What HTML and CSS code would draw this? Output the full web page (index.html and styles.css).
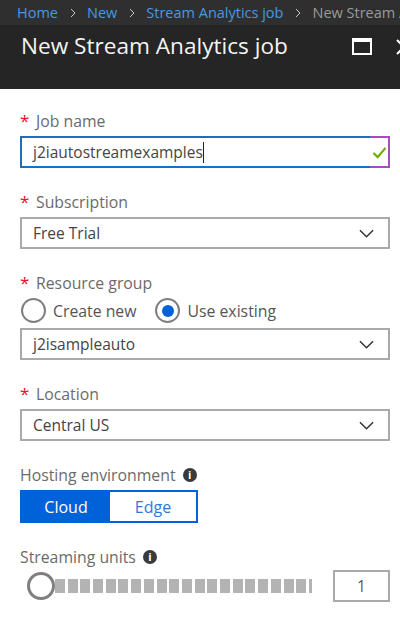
FILE: index.html
```html
<!DOCTYPE html>
<html lang="en">
<head>
  <meta charset="UTF-8" />
  <title>New Stream Analytics job</title>
  <link rel="stylesheet" href="styles.css">
</head>
<body>
  <nav class="crumbs">
    <a>Home</a>
    <svg class="crumb-sep" viewBox="0 0 6 10"><path d="M1 1l4 4-4 4" /></svg>
    <a>New</a>
    <svg class="crumb-sep" viewBox="0 0 6 10"><path d="M1 1l4 4-4 4" /></svg>
    <a>Stream Analytics job</a>
    <svg class="crumb-sep" viewBox="0 0 6 10"><path d="M1 1l4 4-4 4" /></svg>
    <span>New Stream Analytics job</span>
  </nav>

  <header class="blade-head">
    <h1>New Stream Analytics job</h1>
    <span class="maximize"></span>
    <svg class="close" viewBox="0 0 16 16"><path d="M1 1l14 14M15 1L1 15" /></svg>
  </header>

  <form class="blade-form">
    <!-- Job name -->
    <div class="field field-job">
      <div class="label"><span class="req">*</span>Job name</div>
      <div class="box box-focus">
        <span class="value">j2iautostreamexamples</span><span class="caret"></span>
        <span class="valid">
          <svg class="check" viewBox="0 0 16 14"><path d="M1.5 7.5l4.5 4.5L14.5 2" /></svg>
        </span>
      </div>
    </div>

    <!-- Subscription -->
    <div class="field">
      <div class="label"><span class="req">*</span>Subscription</div>
      <div class="box">
        <span class="value">Free Trial</span>
        <svg class="chevron" viewBox="0 0 16 10"><path d="M1 1l7 7 7-7" /></svg>
      </div>
    </div>

    <!-- Resource group -->
    <div class="field">
      <div class="label"><span class="req">*</span>Resource group</div>
      <div class="radios">
        <span class="radio"></span><span class="radio-text radio-text-first">Create new</span>
        <span class="radio radio-on"></span><span class="radio-text">Use existing</span>
      </div>
      <div class="box">
        <span class="value">j2isampleauto</span>
        <svg class="chevron" viewBox="0 0 16 10"><path d="M1 1l7 7 7-7" /></svg>
      </div>
    </div>

    <!-- Location -->
    <div class="field">
      <div class="label"><span class="req">*</span>Location</div>
      <div class="box">
        <span class="value">Central US</span>
        <svg class="chevron" viewBox="0 0 16 10"><path d="M1 1l7 7 7-7" /></svg>
      </div>
    </div>

    <!-- Hosting environment -->
    <div class="field">
      <div class="label">Hosting environment<span class="info">i</span></div>
      <div class="toggle">
        <span class="toggle-on">Cloud</span>
        <span class="toggle-off">Edge</span>
      </div>
    </div>

    <!-- Streaming units -->
    <div class="field">
      <div class="label label-units">Streaming units<span class="info">i</span></div>
      <div class="units">
        <span class="knob"></span>
        <span class="track"></span>
        <span class="units-box">1</span>
      </div>
    </div>
  </form>
</body>
</html>
```

FILE: styles.css
```css
/* Reset */
*, *::before, *::after {
  box-sizing: border-box;
}
html, body {
  height: 100%;
}
body {
  margin: 0;
  overflow: hidden;
  background: #fff;
  font-family: "Open Sans", "Noto Sans", sans-serif;
  color: #444;
}

/* Breadcrumb */
.crumbs {
  display: flex;
  align-items: center;
  height: 25px;
  padding-left: 17px;
  background: #2f2f2f;
  font-size: 14.5px;
  white-space: nowrap;
  overflow: hidden;
}
.crumbs a {
  color: #459ae0;
}
.crumbs span {
  color: #9a9a9a;
}
.crumb-sep {
  flex: none;
  width: 6px;
  height: 10px;
  margin: 0 11px 0 12px;
  fill: none;
  stroke: #c8c8c8;
  stroke-width: 1;
}

/* Blade header */
.blade-head {
  display: flex;
  align-items: flex-start;
  height: 64px;
  padding: 5px 0 0 21px;
  background: #252525;
  overflow: hidden;
}
.blade-head h1 {
  flex: 1;
  margin: 0;
  font-size: 22.6px;
  font-weight: 400;
  line-height: 32px;
  color: #f4f4f4;
}
.maximize {
  flex: none;
  width: 20px;
  height: 17px;
  margin: 8px 0 0 0;
  border: 2px solid #fff;
  border-top-width: 4px;
}
.close {
  flex: none;
  width: 16px;
  height: 16px;
  margin: 9px -12px 0 24px;
  fill: none;
  stroke: #fff;
  stroke-width: 2;
}

/* Form */
.blade-form {
  padding: 0 10px 0 20px;
}
.field {
  margin-top: 22px;
}
.field-job {
  margin-top: 20px;
}
.label {
  display: flex;
  align-items: center;
  height: 23px;
  margin-bottom: 4px;
  font-size: 15.8px;
  color: #6b6b6b;
}
.label-units {
  margin-bottom: 2px;
}
.req {
  width: 16px;
  height: 23px;
  font-size: 17px;
  line-height: 24px;
  color: #e81123;
}
.info {
  width: 14px;
  height: 14px;
  margin-left: 7px;
  border-radius: 50%;
  background: #3a3a3a;
  color: #fff;
  font-size: 11px;
  font-weight: 700;
  line-height: 14px;
  text-align: center;
}
.box {
  display: flex;
  align-items: center;
  height: 32px;
  padding: 0 11px;
  border: 2px solid #a9a9a9;
  font-size: 15.5px;
  color: #444;
}
.value {
  white-space: nowrap;
}
.chevron {
  width: 15px;
  height: 10px;
  margin: 1px 3px 0 auto;
  fill: none;
  stroke: #333;
  stroke-width: 1.6;
}

/* Job name input */
.box-focus {
  position: relative;
  border-color: #1a6fc0;
}
.caret {
  width: 1px;
  height: 21px;
  background: #222;
}
.valid {
  position: absolute;
  top: -2px;
  right: -2px;
  bottom: -2px;
  display: flex;
  align-items: center;
  justify-content: center;
  width: 20px;
  border: 2px solid #a54dbd;
  border-left: none;
}
.check {
  width: 15px;
  height: 13px;
  fill: none;
  stroke: #6cb000;
  stroke-width: 2.4;
}

/* Radios */
.radios {
  display: flex;
  align-items: center;
  height: 25px;
  margin-bottom: 5px;
  padding-left: 1px;
  font-size: 15.8px;
}
.radio {
  display: flex;
  align-items: center;
  justify-content: center;
  flex: none;
  width: 25px;
  height: 25px;
  border: 2px solid #7f7f7f;
  border-radius: 50%;
}
.radio-on::after {
  content: "";
  width: 12px;
  height: 12px;
  border-radius: 50%;
  background: #0062d9;
}
.radio-text {
  margin-left: 7px;
  color: #555;
}
.radio-text-first {
  margin-right: 19px;
}

/* Cloud / Edge toggle */
.toggle {
  display: flex;
  width: 178px;
  height: 33px;
  border: 2px solid #0062d9;
  font-size: 16px;
  line-height: 30px;
  text-align: center;
}
.toggle-on {
  width: 88px;
  background: #0062d9;
  color: #fff;
}
.toggle-off {
  flex: 1;
  color: #2f7ad8;
}

/* Streaming units */
.units {
  display: flex;
  align-items: center;
  height: 32px;
}
.knob {
  flex: none;
  width: 28px;
  height: 28px;
  margin-left: 7px;
  border: 3px solid #7f7f7f;
  border-radius: 50%;
  background: #fff;
}
.track {
  flex: none;
  width: 257px;
  height: 14px;
  background: repeating-linear-gradient(to right, #b3b3b3 0, #b3b3b3 10px, #fff 10px, #fff 12.7px);
}
.units-box {
  width: 57px;
  height: 32px;
  margin-left: auto;
  border: 2px solid #a9a9a9;
  font-size: 15.5px;
  line-height: 28px;
  text-align: center;
  color: #555;
}
```
